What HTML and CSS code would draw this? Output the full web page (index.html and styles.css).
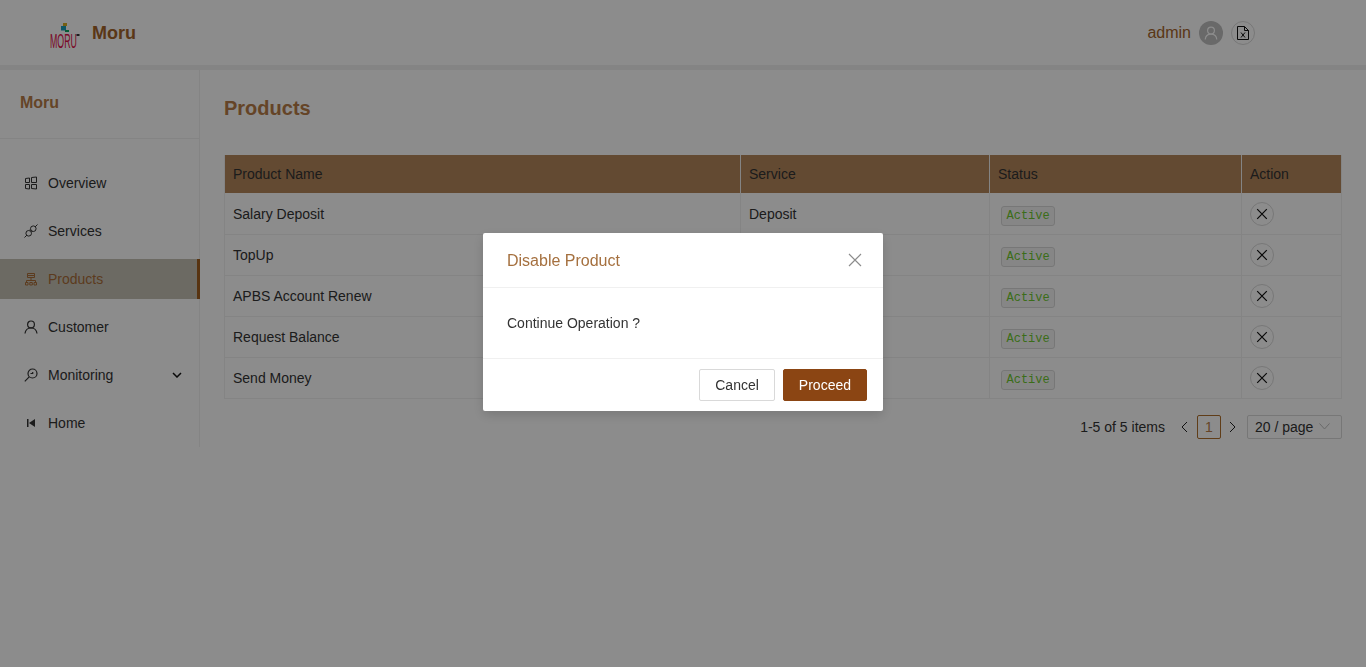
FILE: index.html
```html
<!DOCTYPE html>
<html lang="en">
<head>
  <meta charset="UTF-8">
  <title>Moru - Products</title>
  <link rel="stylesheet" href="styles.css">
</head>
<body>

<header class="topbar">
  <div class="brand">
    <svg class="logo" width="32" height="26" viewBox="0 0 32 26">
      <rect x="13" y="0" width="4" height="3" fill="#d9ae1f"/>
      <rect x="11" y="3" width="5" height="4.500" fill="#1b9fba"/>
      <rect x="15" y="7" width="4" height="2" fill="#0aa862"/>
      <text class="logo-text" transform="translate(0 25) scale(0.42 1)">MORU</text>
      <rect x="26.500" y="11" width="3" height="2" fill="#333"/>
    </svg>
    <span class="brand-name">Moru</span>
  </div>
  <div class="user">
    <span class="user-name">admin</span>
    <span class="avatar">
      <svg width="14" height="14" viewBox="0 0 14 14" fill="none" stroke="#fff" stroke-width="1.200"><circle cx="7" cy="4.600" r="3.400"/><path d="M1.200 13.500c.3-3.300 2.800-5.400 5.800-5.400s5.500 2.100 5.800 5.400"/></svg>
    </span>
    <span class="file-btn">
      <svg width="14" height="16" viewBox="0 0 14 16" fill="none" stroke="#111"><path d="M1.500 1.500h7l4 4v9h-11z"/><path d="M8.500 1.500v4h4"/><path d="M5 7.500l4 5M9 7.500l-4 5"/></svg>
    </span>
  </div>
</header>

<div class="layout">
  <aside class="sidebar">
    <div class="side-title">Moru</div>
    <ul class="menu">
      <li class="menu-item">
        <svg class="menu-icon" viewBox="0 0 14 14" fill="none" stroke="currentColor"><path d="M1.500 2.500l4-.5v4.500h-4zM1.500 8.500h4V13l-4-.5zM7.500 1.500l5-.5v5.500h-5zM7.500 8.500h5V13l-5-.5z"/></svg>
        Overview
      </li>
      <li class="menu-item">
        <svg class="menu-icon" viewBox="0 0 14 14" fill="none" stroke="currentColor"><path d="M13.500.5L11 3M.5 13.500L3 11M6 5.500l2.500 2.500"/><circle cx="9.300" cy="4.700" r="2.800"/><circle cx="4.700" cy="9.300" r="2.800"/></svg>
        Services
      </li>
      <li class="menu-item active">
        <svg class="menu-icon" viewBox="0 0 14 14" fill="none" stroke="currentColor"><path d="M3.500 1.500h7v2h-7zM3.500 3.500h7v2h-7zM7 5.500v3.500M2.500 10.500V8.500h9v2"/><path d="M1.500 10.500h2.500v2.500H1.500zM5.800 10.500h2.500v2.500H5.800zM10 10.500h2.500v2.500H10z"/></svg>
        Products
      </li>
      <li class="menu-item">
        <svg class="menu-icon" viewBox="0 0 14 14" fill="none" stroke="currentColor" stroke-width="1.200"><circle cx="7" cy="4.400" r="3.400"/><path d="M1 13.500c.3-3.500 2.900-5.700 6-5.700s5.700 2.200 6 5.700"/></svg>
        Customer
      </li>
      <li class="menu-item">
        <svg class="menu-icon" viewBox="0 0 14 14" fill="none" stroke="currentColor" stroke-width="1.200"><circle cx="8.500" cy="5.500" r="4.500"/><path d="M5.200 8.800L.8 13.300M6.500 5.500h2.200V4"/></svg>
        Monitoring
        <svg class="caret" width="10" height="6" viewBox="0 0 10 6" fill="none" stroke="#111" stroke-width="1.500"><path d="M1 1l4 4 4-4"/></svg>
      </li>
      <li class="menu-item">
        <svg class="menu-icon" viewBox="0 0 14 14" fill="currentColor"><path d="M3 3h1.500v8H3zM11 3v8L5 7z"/></svg>
        Home
      </li>
    </ul>
  </aside>

  <main class="content">
    <h1 class="page-title">Products</h1>

    <table class="grid">
      <colgroup>
        <col class="col-name"><col class="col-service"><col class="col-status"><col class="col-action">
      </colgroup>
      <thead>
        <tr><th>Product Name</th><th>Service</th><th>Status</th><th>Action</th></tr>
      </thead>
      <tbody>
        <tr>
          <td>Salary Deposit</td><td>Deposit</td><td><code class="tag">Active</code></td>
          <td><span class="x-btn"><svg width="12" height="12" viewBox="0 0 12 12" stroke="#111" stroke-width="1.200"><path d="M1.200 1.200l9.600 9.600M10.800 1.200l-9.600 9.600"/></svg></span></td>
        </tr>
        <tr>
          <td>TopUp</td><td></td><td><code class="tag">Active</code></td>
          <td><span class="x-btn"><svg width="12" height="12" viewBox="0 0 12 12" stroke="#111" stroke-width="1.200"><path d="M1.200 1.200l9.600 9.600M10.800 1.200l-9.600 9.600"/></svg></span></td>
        </tr>
        <tr>
          <td>APBS Account Renew</td><td></td><td><code class="tag">Active</code></td>
          <td><span class="x-btn"><svg width="12" height="12" viewBox="0 0 12 12" stroke="#111" stroke-width="1.200"><path d="M1.200 1.200l9.600 9.600M10.800 1.200l-9.600 9.600"/></svg></span></td>
        </tr>
        <tr>
          <td>Request Balance</td><td></td><td><code class="tag">Active</code></td>
          <td><span class="x-btn"><svg width="12" height="12" viewBox="0 0 12 12" stroke="#111" stroke-width="1.200"><path d="M1.200 1.200l9.600 9.600M10.800 1.200l-9.600 9.600"/></svg></span></td>
        </tr>
        <tr>
          <td>Send Money</td><td></td><td><code class="tag">Active</code></td>
          <td><span class="x-btn"><svg width="12" height="12" viewBox="0 0 12 12" stroke="#111" stroke-width="1.200"><path d="M1.200 1.200l9.600 9.600M10.800 1.200l-9.600 9.600"/></svg></span></td>
        </tr>
      </tbody>
    </table>

    <div class="pager">
      <span class="pager-total">1-5 of 5 items</span>
      <svg class="pager-arrow" width="8" height="12" viewBox="0 0 8 12" fill="none" stroke="#222"><path d="M6 1L1 6l5 5"/></svg>
      <span class="pager-page">1</span>
      <svg class="pager-arrow" width="8" height="12" viewBox="0 0 8 12" fill="none" stroke="#222"><path d="M1 1l5 5-5 5"/></svg>
      <span class="pager-size">20 / page
        <svg width="11" height="7" viewBox="0 0 11 7" fill="none" stroke="#bfbfbf"><path d="M.5.500L5.500 6l5-5.500"/></svg>
      </span>
    </div>
  </main>
</div>

<div class="overlay">
  <div class="modal">
    <div class="modal-head">
      <span class="modal-title">Disable Product</span>
      <svg width="14" height="14" viewBox="0 0 14 14" stroke="#8c8c8c" stroke-width="1.200"><path d="M1 1l12 12M13 1L1 13"/></svg>
    </div>
    <div class="modal-body">Continue Operation ?</div>
    <div class="modal-foot">
      <button class="btn" type="button">Cancel</button>
      <button class="btn btn-primary" type="button">Proceed</button>
    </div>
  </div>
</div>

</body>
</html>
```

FILE: styles.css
```css
* {
  box-sizing: border-box;
}
body {
  margin: 0;
  font-family: "Liberation Sans", Arial, sans-serif;
  font-size: 14px;
  color: #333;
  background: #fff;
}

.topbar {
  height: 70px;
  display: flex;
  align-items: center;
  justify-content: space-between;
  padding: 1px 111px 0 50px;
  border-bottom: 5px solid #f0f0f0;
}
.brand {
  display: flex;
  align-items: center;
}
.logo {
  display: block;
  margin-top: 6px;
  overflow: visible;
}
.logo-text {
  font-family: "Liberation Sans", Arial, sans-serif;
  font-size: 21px;
  fill: #e0104a;
}
.brand-name {
  margin-left: 10px;
  font-size: 18px;
  font-weight: bold;
  color: #a5642a;
}
.user {
  display: flex;
  align-items: center;
}
.user-name {
  font-size: 16px;
  color: #a5642a;
}
.avatar {
  width: 24px;
  height: 24px;
  margin-left: 8px;
  border-radius: 50%;
  background: #bfbfbf;
  display: flex;
  align-items: center;
  justify-content: center;
}
.file-btn {
  width: 24px;
  height: 24px;
  margin-left: 8px;
  border: 1px solid #d9d9d9;
  border-radius: 50%;
  display: flex;
  align-items: center;
  justify-content: center;
}

.layout {
  display: flex;
  align-items: flex-start;
}
.sidebar {
  width: 200px;
  flex: none;
  height: 377px;
  border-right: 1px solid #f0f0f0;
}
.side-title {
  height: 69px;
  padding: 23px 20px 0;
  font-size: 16px;
  font-weight: bold;
  line-height: 20px;
  color: #b87d48;
  border-bottom: 1px solid #f0f0f0;
}
.menu {
  list-style: none;
  margin: 24px 0 0;
  padding: 0;
}
.menu-item {
  height: 40px;
  margin-bottom: 8px;
  margin-right: -1px;
  padding-left: 24px;
  display: flex;
  align-items: center;
}
.menu-icon {
  width: 14px;
  height: 14px;
  margin-right: 10px;
  flex: none;
}
.menu-item.active {
  background: #c5c2b5;
  color: #a86c38;
  border-right: 3px solid #a0601f;
}
.caret {
  margin-left: auto;
  margin-right: 18px;
}

.content {
  flex: 1;
  min-width: 0;
  padding: 24px 24px 0;
}
.page-title {
  margin: 0 0 33px;
  font-size: 20px;
  line-height: 28px;
  font-weight: bold;
  color: #b87d48;
}

.grid {
  width: 100%;
  table-layout: fixed;
  border-collapse: collapse;
  border: 1px solid #f0f0f0;
  border-top: none;
}
.col-name { width: 516px; }
.col-service { width: 249px; }
.col-status { width: 252px; }
.col-action { width: 100px; }
.grid th {
  height: 38px;
  padding: 0 8px;
  text-align: left;
  font-weight: normal;
  background: #b5875c;
  border-left: 1px solid #f0f0f0;
}
.grid th:first-child {
  border-left: none;
}
.grid td {
  height: 41px;
  padding: 0 8px;
  border-left: 1px solid #f0f0f0;
  border-bottom: 1px solid #f0f0f0;
}
.grid tbody tr:first-child td {
  padding-top: 1px;
}
.tag {
  display: inline-block;
  margin: 4px 0 0 3px;
  padding: 0 4.500px;
  height: 20px;
  line-height: 19px;
  font-family: "Liberation Mono", monospace;
  font-size: 12px;
  color: #6cc72e;
  background: #f5f5f5;
  border: 1px solid #d9d9d9;
  border-radius: 3px;
}
.x-btn {
  width: 24px;
  height: 24px;
  border: 1px solid #d9d9d9;
  border-radius: 50%;
  display: flex;
  align-items: center;
  justify-content: center;
}

.pager {
  margin-top: 16px;
  display: flex;
  align-items: center;
  justify-content: flex-end;
  height: 24px;
}
.pager-total {
  margin-right: 16px;
}
.pager-arrow {
  margin: 1px 0 0;
}
.pager-page {
  width: 24px;
  height: 24px;
  margin: 0 8px;
  border: 1px solid #b06f2c;
  border-radius: 2px;
  color: #b87d48;
  text-align: center;
  line-height: 22px;
}
.pager-size {
  width: 95px;
  height: 24px;
  margin-left: 10px;
  padding-left: 7px;
  border: 1px solid #d9d9d9;
  border-radius: 2px;
  display: flex;
  align-items: center;
  gap: 6px;
  line-height: 22px;
}

.overlay {
  position: fixed;
  inset: 0;
  background: rgba(0,0,0,0.45);
  display: flex;
  justify-content: center;
  align-items: flex-start;
  padding-top: 233px;
}
.modal {
  width: 400px;
  background: #fff;
  border-radius: 2px;
  box-shadow: 0 4px 12px rgba(0,0,0,0.15);
}
.modal-head {
  height: 55px;
  padding: 0 21px 0 24px;
  display: flex;
  align-items: center;
  justify-content: space-between;
  border-bottom: 1px solid #f0f0f0;
}
.modal-title {
  padding-top: 1px;
  font-size: 16px;
  color: #a5703f;
}
.modal-body {
  height: 70px;
  padding: 0 24px;
  display: flex;
  align-items: center;
}
.modal-foot {
  height: 53px;
  padding: 0 16px;
  display: flex;
  align-items: center;
  justify-content: flex-end;
  gap: 8px;
  border-top: 1px solid #f0f0f0;
}
.btn {
  height: 32px;
  padding: 0 15px;
  font: inherit;
  color: #333;
  background: #fff;
  border: 1px solid #d9d9d9;
  border-radius: 2px;
  cursor: pointer;
}
.btn-primary {
  color: #fff;
  background: #8b4513;
  border-color: #8b4513;
}
```
